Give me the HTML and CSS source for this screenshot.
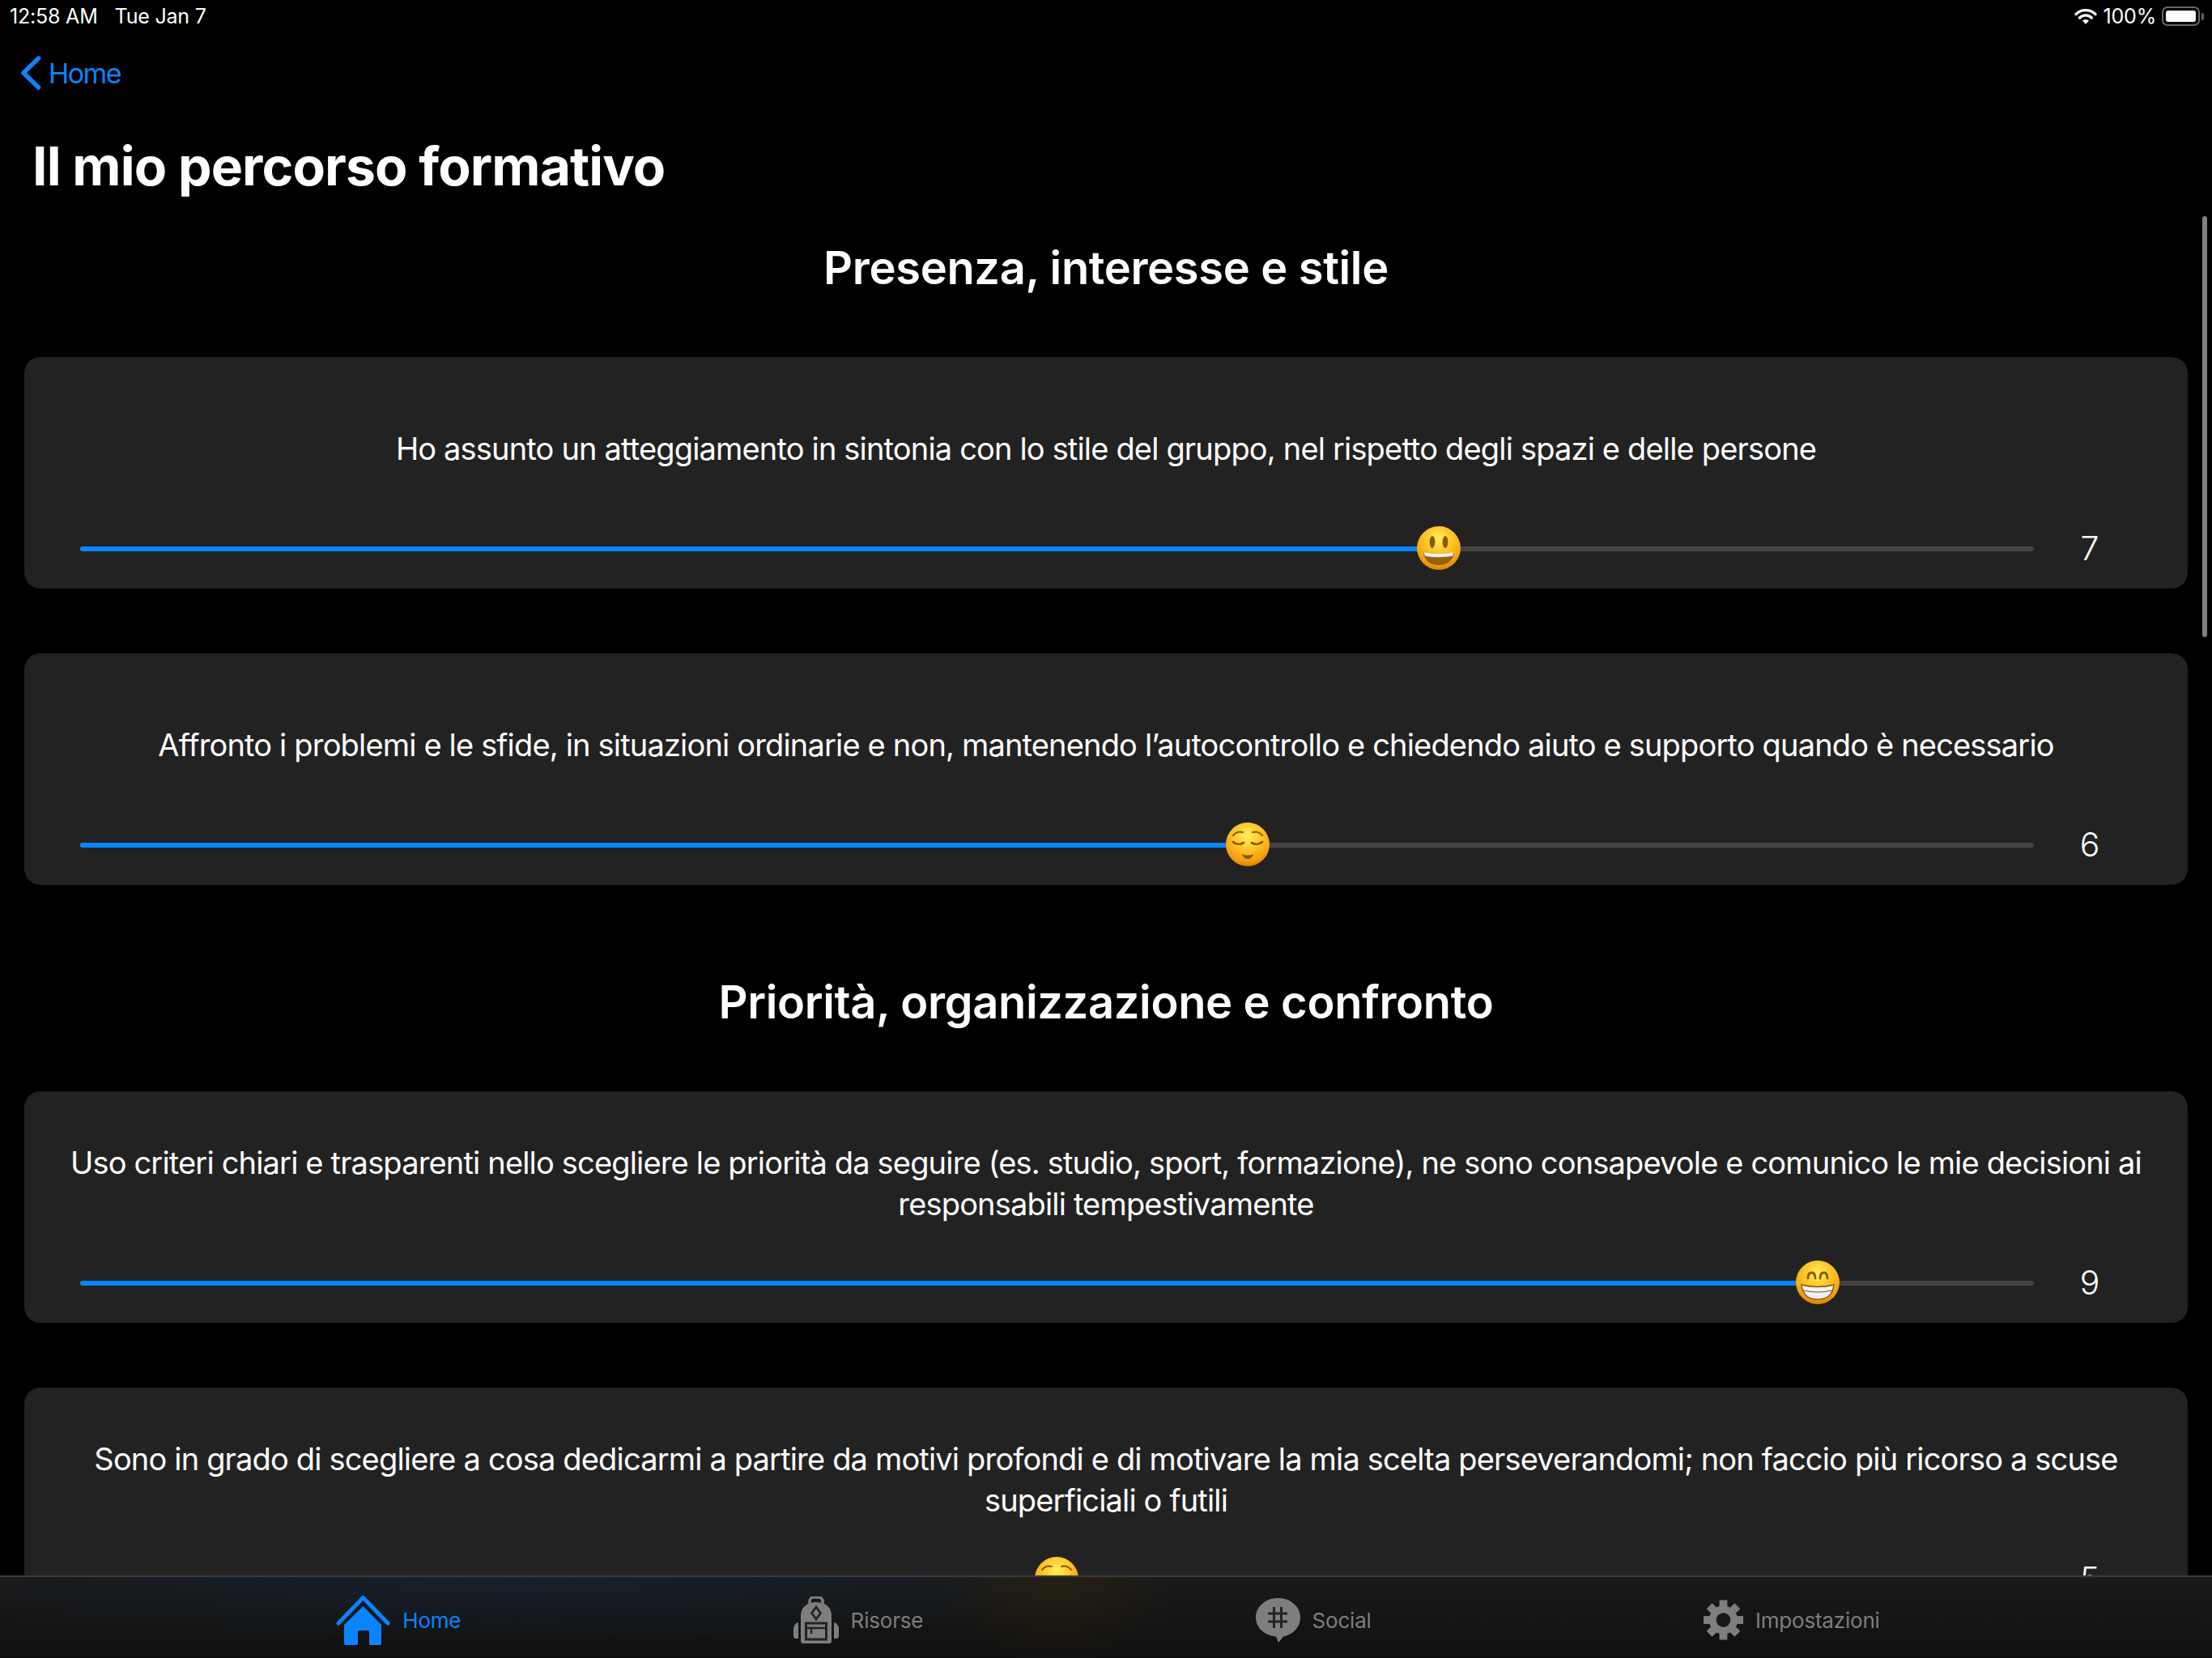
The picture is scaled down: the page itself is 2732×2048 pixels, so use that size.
FILE: index.html
```html
<!DOCTYPE html>
<html lang="it">
<head>
    <meta charset="UTF-8">
    <meta name="viewport" content="width=device-width, initial-scale=1.0">
    <title>Il mio percorso formativo</title>
    <link rel="stylesheet" href="styles.css">
</head>
<body>
<div class="page">
    <main class="content">
        <div class="status-bar">
            <div class="status-left"><span>12:58 AM</span><span>Tue Jan 7</span></div>
            <div class="status-right">
                <svg class="wifi" width="28" height="20" viewBox="0 0 28 20">
                    <path d="M2 7.5a17 17 0 0 1 24 0M6.6 12a10.5 10.5 0 0 1 14.8 0" fill="none" stroke="#fff" stroke-width="3.2" stroke-linecap="round"/>
                    <path d="M10 15.6a5.6 5.6 0 0 1 8 0L14 20z" fill="#fff"/>
                </svg>
                <span>100%</span>
                <div class="battery"><div class="battery-level"></div></div>
                <div class="battery-nub"></div>
            </div>
        </div>

        <a class="back" href="#">
            <svg width="26" height="42" viewBox="0 0 26 42"><path d="M22.5 3 4 21l18.5 18" fill="none" stroke="#0a84ff" stroke-width="5.4" stroke-linecap="round" stroke-linejoin="round"/></svg>
            <span>Home</span>
        </a>

        <h1>Il mio percorso formativo</h1>

        <h2>Presenza, interesse e stile</h2>

        <div class="card">
            <p>Ho assunto un atteggiamento in sintonia con lo stile del gruppo, nel rispetto degli spazi e delle persone</p>
            <div class="slider-row">
                <div class="track">
                    <div class="fill" style="width: 1678px">
                        <svg class="thumb" width="54" height="54" viewBox="0 0 54 54">
                            <defs>
                                <radialGradient id="face" cx="50%" cy="30%" r="72%">
                                    <stop offset="0" stop-color="#ffee60"/>
                                    <stop offset="0.45" stop-color="#fcc425"/>
                                    <stop offset="0.8" stop-color="#f5a012"/>
                                    <stop offset="1" stop-color="#d67c05"/>
                                </radialGradient>
                            </defs>
                            <circle cx="27" cy="27" r="27" fill="url(#face)"/>
                            <ellipse cx="19" cy="19.5" rx="3.4" ry="7.6" fill="#8f5a05"/>
                            <ellipse cx="35" cy="19.5" rx="3.4" ry="7.6" fill="#8f5a05"/>
                            <path d="M8 32q19 4 38 0q-2 16-19 16T8 32z" fill="#9a6206"/>
                            <path d="M8.5 32q18.500 4 37 0l-1.500 4.800q-17 3-34 0z" fill="#eef0f2"/>
                        </svg>
                    </div>
                </div>
                <div class="value">7</div>
            </div>
        </div>

        <div class="card">
            <p>Affronto i problemi e le sfide, in situazioni ordinarie e non, mantenendo l’autocontrollo e chiedendo aiuto e supporto quando è necessario</p>
            <div class="slider-row">
                <div class="track">
                    <div class="fill" style="width: 1442px">
                        <svg class="thumb" width="54" height="54" viewBox="0 0 54 54">
                            <circle cx="27" cy="27" r="27" fill="url(#face)"/>
                            <path d="M9 16q5-6 12-4M45 16q-5-6-12-4" fill="none" stroke="#8f5a05" stroke-width="2" stroke-linecap="round"/>
                            <path d="M9 24q6 5 13 1M45 24q-6 5-13 1" fill="none" stroke="#8f5a05" stroke-width="2.600" stroke-linecap="round"/>
                            <path d="M20 39q7 3 14 0q-2 6-7 6t-7-6z" fill="#8f5a05"/>
                        </svg>
                    </div>
                </div>
                <div class="value">6</div>
            </div>
        </div>

        <h2 class="next-section">Priorità, organizzazione e confronto</h2>

        <div class="card">
            <p>Uso criteri chiari e trasparenti nello scegliere le priorità da seguire (es. studio, sport, formazione), ne sono consapevole e comunico le mie decisioni ai responsabili tempestivamente</p>
            <div class="slider-row">
                <div class="track">
                    <div class="fill" style="width: 2146px">
                        <svg class="thumb" width="54" height="54" viewBox="0 0 54 54">
                            <circle cx="27" cy="27" r="27" fill="url(#face)"/>
                            <path d="M15 22q0-7 4.500-7t4.500 7M30 22q0-7 4.500-7t4.500 7" fill="none" stroke="#8f5a05" stroke-width="2.800" stroke-linecap="round"/>
                            <path d="M7 30q20 5 40 0q-2 18-20 18T7 30z" fill="#eef0f2" stroke="#8a5a10" stroke-width="1.500"/>
                            <path d="M9 37q18 4 36 0" fill="none" stroke="#8a5a10" stroke-width="1.200"/>
                        </svg>
                    </div>
                </div>
                <div class="value">9</div>
            </div>
        </div>

        <div class="card">
            <p>Sono in grado di scegliere a cosa dedicarmi a partire da motivi profondi e di motivare la mia scelta perseverandomi; non faccio più ricorso a scuse superficiali o futili</p>
            <div class="slider-row">
                <div class="track">
                    <div class="fill" style="width: 1206px">
                        <svg class="thumb" width="54" height="54" viewBox="0 0 54 54">
                            <circle cx="27" cy="27" r="27" fill="url(#face)"/>
                            <path d="M9 16q5-6 12-4M45 16q-5-6-12-4" fill="none" stroke="#8f5a05" stroke-width="2" stroke-linecap="round"/>
                            <path d="M9 24q6 5 13 1M45 24q-6 5-13 1" fill="none" stroke="#8f5a05" stroke-width="2.600" stroke-linecap="round"/>
                        </svg>
                    </div>
                </div>
                <div class="value">5</div>
            </div>
        </div>

        <div class="scrollbar"></div>
    </main>

    <nav class="tabbar">
        <a class="tab active" href="#">
            <svg width="67" height="61" viewBox="0 0 67 61">
                <path d="M3 34 33.500 2.500 64 34" fill="none" stroke="#0a84ff" stroke-width="5" stroke-linecap="round" stroke-linejoin="round"/>
                <path d="M33.500 13 56 36v23a2 2 0 0 1-2 2H43a2 2 0 0 1-2-2V45a2 2 0 0 0-2-2H29a2 2 0 0 0-2 2v14a2 2 0 0 1-2 2H12a2 2 0 0 1-2-2V36z" fill="#0a84ff"/>
            </svg>
            <span>Home</span>
        </a>
        <a class="tab" href="#">
            <svg width="56" height="58" viewBox="0 0 56 58">
                <path d="M20 11V6a5 5 0 0 1 5-5h6a5 5 0 0 1 5 5v5" fill="none" stroke="#7e7e7e" stroke-width="3.500"/>
                <path d="M9 24C9 13 17 7 28 7s19 6 19 17v31a3 3 0 0 1-3 3H12a3 3 0 0 1-3-3z" fill="#7e7e7e"/>
                <path d="M6 32v20H3a3 3 0 0 1-3-3v-9q0-6 6-8zM50 32v20h3a3 3 0 0 0 3-3v-9q0-6-6-8z" fill="#7e7e7e"/>
                <path d="M28 13l5.500 7.500L28 28l-5.500-7.500z" fill="none" stroke="#232323" stroke-width="2.600"/>
                <rect x="15.500" y="33" width="25" height="20" fill="none" stroke="#232323" stroke-width="3"/>
                <path d="M15.500 39h25M22 39v7" fill="none" stroke="#232323" stroke-width="2.400"/>
            </svg>
            <span>Risorse</span>
        </a>
        <a class="tab" href="#">
            <svg width="55" height="55" viewBox="0 0 55 55">
                <path d="M27.500 0C43 0 55 10.500 55 24c0 12-9 21-21 23.500L28 55l-3-7.500C11 46 0 37 0 24 0 10.500 12 0 27.500 0z" fill="#7e7e7e"/>
                <path d="M22.500 11v26M31.500 11v26M15 19h24M15 29h24" fill="none" stroke="#232323" stroke-width="3"/>
            </svg>
            <span>Social</span>
        </a>
        <a class="tab" href="#">
            <svg width="49" height="50" viewBox="-25 -25 50 50">
                <g fill="#7e7e7e">
                    <rect x="-5" y="-25" width="10" height="50"/>
                    <rect x="-5" y="-25" width="10" height="50" transform="rotate(45)"/>
                    <rect x="-5" y="-25" width="10" height="50" transform="rotate(90)"/>
                    <rect x="-5" y="-25" width="10" height="50" transform="rotate(135)"/>
                    <circle r="18"/>
                </g>
                <circle r="9" fill="#171819"/>
            </svg>
            <span>Impostazioni</span>
        </a>
    </nav>
</div>
</body>
</html>
```

FILE: styles.css
```css
* {
    box-sizing: border-box;
}

html, body {
    margin: 0;
    height: 100%;
    background: #000;
}

body {
    color: #fff;
    font-family: Inter, "Liberation Sans", sans-serif;
}

.page {
    display: flex;
    flex-direction: column;
    height: 2048px;
    overflow: hidden;
}

.content {
    position: relative;
    flex: 1;
    min-height: 0;
    padding: 0 30px;
    overflow: hidden;
}

.status-bar {
    display: flex;
    justify-content: space-between;
    align-items: center;
    height: 40px;
    margin: 0 -20px 0 -18px;
    font-size: 25px;
    letter-spacing: -0.2px;
}

.status-left {
    display: flex;
    gap: 21px;
}

.status-right {
    display: flex;
    align-items: center;
}

.wifi {
    margin-right: 8px;
}

.battery {
    width: 47px;
    height: 24px;
    margin-left: 7px;
    padding: 3px;
    border: 2px solid #666;
    border-radius: 7px;
}

.battery-level {
    height: 100%;
    background: #fff;
    border-radius: 3px;
}

.battery-nub {
    width: 3px;
    height: 9px;
    margin-left: 2px;
    background: #666;
    border-radius: 0 3px 3px 0;
}

.back {
    display: flex;
    align-items: center;
    gap: 9px;
    height: 100px;
    margin-left: -5px;
    color: #0a84ff;
    font-size: 34px;
    letter-spacing: -1.6px;
    text-decoration: none;
}

h1 {
    margin: 27px 0 0 10px;
    font-size: 66px;
    line-height: 76px;
    font-weight: 700;
    letter-spacing: -0.9px;
}

h2 {
    margin: 58px 0 80px;
    font-size: 56px;
    line-height: 60px;
    font-weight: 600;
    letter-spacing: -0.35px;
    text-align: center;
}

h2.next-section {
    margin-top: 115px;
}

.card {
    height: 286px;
    margin-bottom: 80px;
    padding: 62px 50px 23px;
    background: #222;
    border-radius: 20px;
}

.card p {
    display: flex;
    align-items: center;
    justify-content: center;
    height: 103px;
    margin: 0 0 44px;
    font-size: 38px;
    line-height: 51px;
    letter-spacing: -0.83px;
    text-align: center;
}

.slider-row {
    display: flex;
    align-items: center;
    height: 54px;
    padding: 0 4px 0 19px;
}

.track {
    flex: 1;
    height: 6px;
    margin-top: 2px;
    background: #444;
    border-radius: 3px;
}

.fill {
    position: relative;
    height: 6px;
    background: #0a84ff;
    border-radius: 3px 0 0 3px;
}

.thumb {
    position: absolute;
    top: -25px;
    right: -27px;
}

.value {
    width: 136px;
    padding-left: 2px;
    font-size: 41px;
    font-weight: 300;
    text-align: center;
}

.scrollbar {
    position: absolute;
    top: 267px;
    right: 6px;
    width: 6px;
    height: 520px;
    background: #808080;
    border-radius: 3px;
}

.tabbar {
    display: flex;
    justify-content: space-evenly;
    align-items: center;
    flex: none;
    height: 102px;
    padding: 6px 0 0 5px;
    border-top: 2px solid #3a3a3a;
    background:
        radial-gradient(ellipse 150px 110px at 1305px 0, rgba(70, 45, 0, 0.3), transparent),
        radial-gradient(ellipse 800px 70px at 640px 10px, rgba(10, 70, 130, 0.16), transparent),
        linear-gradient(#1a1a1a, #101010);
}

.tab {
    display: flex;
    align-items: center;
    gap: 15px;
    color: #7e7e7e;
    font-size: 26px;
    letter-spacing: -0.2px;
    text-decoration: none;
}

.tab.active {
    color: #0a84ff;
}
```
